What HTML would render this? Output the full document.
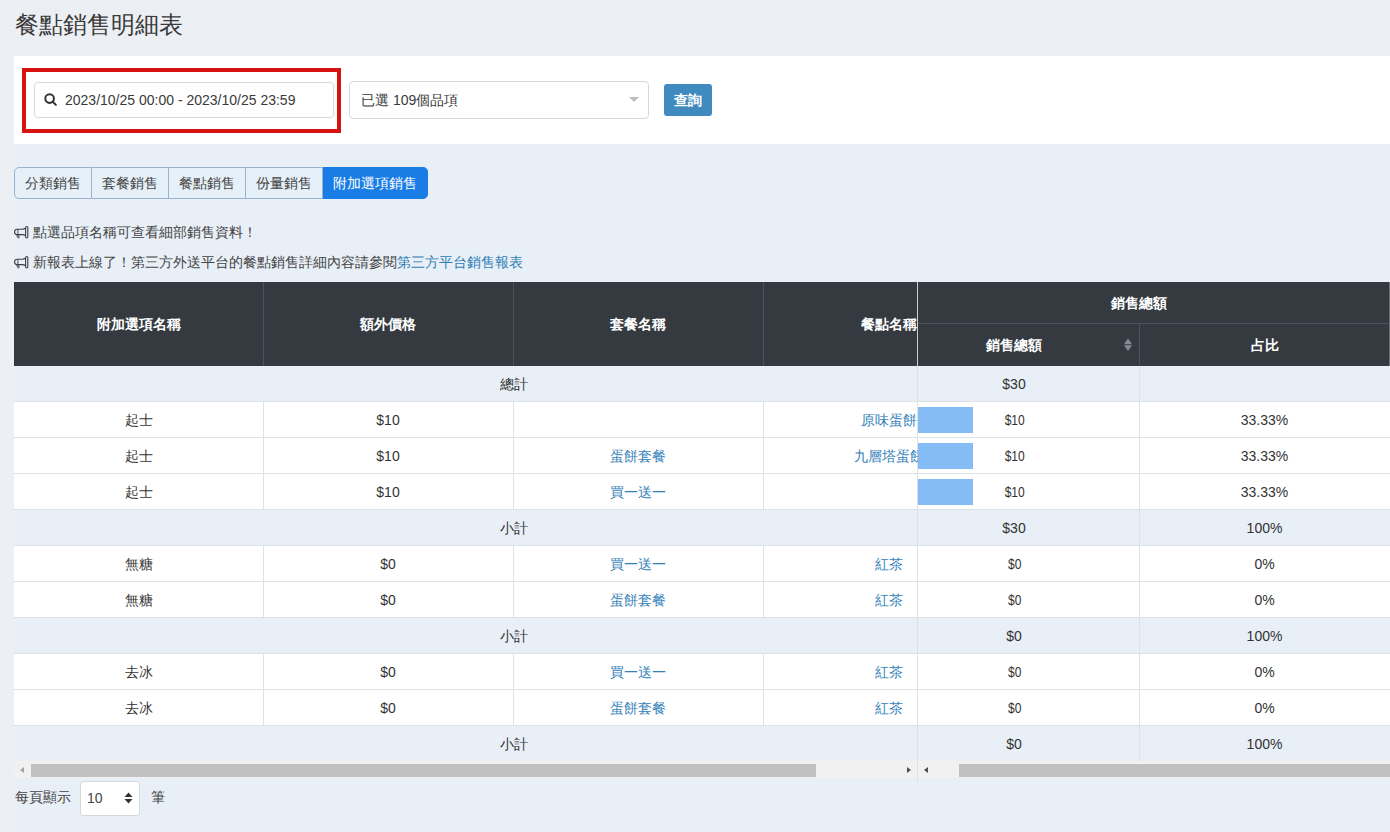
<!DOCTYPE html>
<html><head><meta charset="utf-8">
<style>
*{box-sizing:border-box;margin:0;padding:0}
html,body{width:1390px;height:832px;overflow:hidden}
body{background:#eceff3;font-family:"Liberation Sans",sans-serif;color:#333;font-size:14px;position:relative}
.abs{position:absolute}
#title{left:15px;top:9px;font-size:24px;line-height:32px;color:#3a3a3a;white-space:nowrap;font-weight:300}
#cont{left:14px;top:144px;width:1376px;height:688px;background:#e8eff6}
#panel{left:14px;top:56px;width:1376px;height:88px;background:#fff}
#redbox{left:22px;top:68px;width:319px;height:65px;border:4px solid #d81111}
#date{left:34px;top:82px;width:300px;height:36px;border:1px solid #d6d9dc;border-radius:4px;background:#fff}
#datetxt{left:65px;top:91px;line-height:18px;font-size:14px;color:#3a3a3a;white-space:nowrap}
#sel{left:349px;top:81px;width:300px;height:38px;border:1px solid #d6d9dc;border-radius:4px;background:#fff}
#seltxt{left:361px;top:91px;line-height:18px;color:#3a3a3a;white-space:nowrap}
#caret{left:629px;top:97px;width:0;height:0;border-left:5px solid transparent;border-right:5px solid transparent;border-top:5px solid #bdbdbd}
#btn{left:664px;top:84px;width:48px;height:32px;background:#3f8abf;border-radius:3px;color:#fff;text-align:center;line-height:32px;font-weight:bold}
#tabs{left:14px;top:167px;height:32px;display:flex}
.tab{height:32px;line-height:30px;border:1px solid #98b3cb;border-left:none;background:#e6f0f8;color:#444;text-align:center;white-space:nowrap}
.tab.first{border-left:1px solid #98b3cb;border-radius:5px 0 0 5px}
.tab.act{background:#1a7de6;border-color:#1a7de6;color:#fff;border-radius:0 5px 5px 0}
.notice{left:14px;line-height:18px;white-space:nowrap;color:#444}
.notice a{color:#2f7db5;text-decoration:none}
#thead{left:14px;top:282px;width:1376px;height:84px;background:#343a40}
.th{color:#fff;white-space:nowrap;line-height:18px;text-align:center;font-weight:bold}
.vl{width:1px;background:#4a5159}
.row{left:14px;width:1376px;height:36px;background:#fff;border-bottom:1px solid #dee2e6}
.row.tot{background:#e8eff6}
.cell{line-height:18px;white-space:nowrap;text-align:center;color:#333}
.sm span{display:inline-block;transform:scaleX(.86)}
.lk{color:#3481b9}
.bar{left:918px;width:55px;height:26px;background:#86bcf6}
.vb{width:1px;background:#dee2e6}
</style></head><body>
<div class="abs" id="title">餐點銷售明細表</div>
<div class="abs" id="cont"></div>
<div class="abs" id="panel"></div>
<div class="abs" id="redbox"></div>
<div class="abs" id="date"></div>
<svg class="abs" style="left:44px;top:93px" width="14" height="14" viewBox="0 0 14 14"><circle cx="5.6" cy="5.6" r="4.3" fill="none" stroke="#333" stroke-width="2"/><line x1="8.8" y1="8.8" x2="11.9" y2="11.9" stroke="#333" stroke-width="2" stroke-linecap="round"/></svg>
<div class="abs" id="datetxt">2023/10/25 00:00 - 2023/10/25 23:59</div>
<div class="abs" id="sel"></div>
<div class="abs" id="seltxt">已選 109個品項</div>
<div class="abs" id="caret"></div>
<div class="abs" id="btn">查詢</div>

<div class="abs" id="tabs">
<div class="tab first" style="width:78px">分類銷售</div>
<div class="tab" style="width:77px">套餐銷售</div>
<div class="tab" style="width:77px">餐點銷售</div>
<div class="tab" style="width:77px">份量銷售</div>
<div class="tab act" style="width:105px">附加選項銷售</div>
</div>

<svg class="abs" style="left:14px;top:226px" width="15" height="13" viewBox="0 0 15 13"><rect x="11.6" y="0.55" width="2.2" height="11.4" rx="1.1" fill="none" stroke="#3a3f44" stroke-width="1.1"/><path d="M11.5 2.3Q10 3.2 8.5 3.2H3Q0.6 3.2 0.6 6Q0.6 8.6 3 8.6H8.5Q10 8.6 11.5 9.4" fill="none" stroke="#3a3f44" stroke-width="1.1"/><path d="M3.9 3.4V8.4" stroke="#3a3f44" stroke-width="0.9"/><path d="M2.6 8.5L3.6 11.3Q3.9 11.9 4.5 11.9Q5.2 11.8 5.1 11L4.6 8.6" fill="none" stroke="#3a3f44" stroke-width="1"/></svg>
<div class="abs notice" style="top:223px;left:33px">點選品項名稱可查看細部銷售資料！</div>
<svg class="abs" style="left:14px;top:256px" width="15" height="13" viewBox="0 0 15 13"><rect x="11.6" y="0.55" width="2.2" height="11.4" rx="1.1" fill="none" stroke="#3a3f44" stroke-width="1.1"/><path d="M11.5 2.3Q10 3.2 8.5 3.2H3Q0.6 3.2 0.6 6Q0.6 8.6 3 8.6H8.5Q10 8.6 11.5 9.4" fill="none" stroke="#3a3f44" stroke-width="1.1"/><path d="M3.9 3.4V8.4" stroke="#3a3f44" stroke-width="0.9"/><path d="M2.6 8.5L3.6 11.3Q3.9 11.9 4.5 11.9Q5.2 11.8 5.1 11L4.6 8.6" fill="none" stroke="#3a3f44" stroke-width="1"/></svg>
<div class="abs notice" style="top:253px;left:33px">新報表上線了！第三方外送平台的餐點銷售詳細內容請參閱<a>第三方平台銷售報表</a></div>

<div class="abs" id="thead"></div>
<div class="abs vl" style="left:263px;top:282px;height:84px"></div>
<div class="abs vl" style="left:513px;top:282px;height:84px"></div>
<div class="abs vl" style="left:763px;top:282px;height:84px"></div>
<div class="abs vl" style="left:917px;top:282px;height:84px;background:#c8ccd0"></div>
<div class="abs vl" style="left:918px;top:323px;height:1px;width:472px"></div>
<div class="abs vl" style="left:1139px;top:324px;height:42px"></div>
<div class="abs th" style="left:14px;top:315px;width:249px">附加選項名稱</div>
<div class="abs th" style="left:263px;top:315px;width:250px">額外價格</div>
<div class="abs th" style="left:513px;top:315px;width:250px">套餐名稱</div>
<div class="abs th" style="left:861px;top:315px;width:57px;overflow:hidden;text-align:left">餐點名稱</div>
<div class="abs th" style="left:1039px;top:294px;width:200px">銷售總額</div>
<div class="abs th" style="left:918px;top:336px;width:191px">銷售總額</div>
<div class="abs th" style="left:1139px;top:336px;width:251px">占比</div>
<svg class="abs" style="left:1123px;top:338px" width="10" height="14" viewBox="0 0 10 14"><path d="M1 6.3L5 0.6L9 6.3Z M1 7.3L5 13L9 7.3Z" fill="#858b94"/></svg>
<div class="abs" style="left:1389px;top:282px;width:1px;height:84px;background:#6c7178"></div>
<div class="abs" style="left:1389px;top:366px;width:1px;height:395px;background:#dee2e6"></div>

<!--ROWS-->
<div class="abs row tot" style="top:366px"></div>
<div class="abs cell" style="left:414px;top:375px;width:200px">總計</div>
<div class="abs cell" style="left:918px;top:375px;width:192px">$30</div>
<div class="abs vb" style="left:917px;top:366px;height:36px"></div>
<div class="abs vb" style="left:1139px;top:366px;height:36px"></div>
<div class="abs row" style="top:402px"></div>
<div class="abs vb" style="left:263px;top:402px;height:36px"></div>
<div class="abs vb" style="left:513px;top:402px;height:36px"></div>
<div class="abs vb" style="left:763px;top:402px;height:36px"></div>
<div class="abs vb" style="left:917px;top:402px;height:36px"></div>
<div class="abs vb" style="left:1139px;top:402px;height:36px"></div>
<div class="abs cell" style="left:14px;top:411px;width:249px">起士</div>
<div class="abs cell" style="left:263px;top:411px;width:250px">$10</div>
<div class="abs cell lk" style="left:763px;top:411px;width:155px;height:18px;overflow:hidden"><span style="position:absolute;left:98px">原味蛋餅</span></div>
<div class="abs bar" style="top:407px"></div>
<div class="abs cell sm" style="left:919px;top:411px;width:192px"><span>$10</span></div>
<div class="abs cell" style="left:1139px;top:411px;width:251px">33.33%</div>
<div class="abs row" style="top:438px"></div>
<div class="abs vb" style="left:263px;top:438px;height:36px"></div>
<div class="abs vb" style="left:513px;top:438px;height:36px"></div>
<div class="abs vb" style="left:763px;top:438px;height:36px"></div>
<div class="abs vb" style="left:917px;top:438px;height:36px"></div>
<div class="abs vb" style="left:1139px;top:438px;height:36px"></div>
<div class="abs cell" style="left:14px;top:447px;width:249px">起士</div>
<div class="abs cell" style="left:263px;top:447px;width:250px">$10</div>
<div class="abs cell lk" style="left:513px;top:447px;width:250px">蛋餅套餐</div>
<div class="abs cell lk" style="left:763px;top:447px;width:155px;height:18px;overflow:hidden"><span style="position:absolute;left:91px">九層塔蛋餅</span></div>
<div class="abs bar" style="top:443px"></div>
<div class="abs cell sm" style="left:919px;top:447px;width:192px"><span>$10</span></div>
<div class="abs cell" style="left:1139px;top:447px;width:251px">33.33%</div>
<div class="abs row" style="top:474px"></div>
<div class="abs vb" style="left:263px;top:474px;height:36px"></div>
<div class="abs vb" style="left:513px;top:474px;height:36px"></div>
<div class="abs vb" style="left:763px;top:474px;height:36px"></div>
<div class="abs vb" style="left:917px;top:474px;height:36px"></div>
<div class="abs vb" style="left:1139px;top:474px;height:36px"></div>
<div class="abs cell" style="left:14px;top:483px;width:249px">起士</div>
<div class="abs cell" style="left:263px;top:483px;width:250px">$10</div>
<div class="abs cell lk" style="left:513px;top:483px;width:250px">買一送一</div>
<div class="abs bar" style="top:479px"></div>
<div class="abs cell sm" style="left:919px;top:483px;width:192px"><span>$10</span></div>
<div class="abs cell" style="left:1139px;top:483px;width:251px">33.33%</div>
<div class="abs row tot" style="top:510px"></div>
<div class="abs cell" style="left:414px;top:519px;width:200px">小計</div>
<div class="abs cell" style="left:918px;top:519px;width:192px">$30</div>
<div class="abs cell" style="left:1139px;top:519px;width:251px">100%</div>
<div class="abs vb" style="left:917px;top:510px;height:36px"></div>
<div class="abs vb" style="left:1139px;top:510px;height:36px"></div>
<div class="abs row" style="top:546px"></div>
<div class="abs vb" style="left:263px;top:546px;height:36px"></div>
<div class="abs vb" style="left:513px;top:546px;height:36px"></div>
<div class="abs vb" style="left:763px;top:546px;height:36px"></div>
<div class="abs vb" style="left:917px;top:546px;height:36px"></div>
<div class="abs vb" style="left:1139px;top:546px;height:36px"></div>
<div class="abs cell" style="left:14px;top:555px;width:249px">無糖</div>
<div class="abs cell" style="left:263px;top:555px;width:250px">$0</div>
<div class="abs cell lk" style="left:513px;top:555px;width:250px">買一送一</div>
<div class="abs cell lk" style="left:763px;top:555px;width:155px;height:18px;overflow:hidden"><span style="position:absolute;left:112px">紅茶</span></div>
<div class="abs cell sm" style="left:919px;top:555px;width:192px"><span>$0</span></div>
<div class="abs cell" style="left:1139px;top:555px;width:251px">0%</div>
<div class="abs row" style="top:582px"></div>
<div class="abs vb" style="left:263px;top:582px;height:36px"></div>
<div class="abs vb" style="left:513px;top:582px;height:36px"></div>
<div class="abs vb" style="left:763px;top:582px;height:36px"></div>
<div class="abs vb" style="left:917px;top:582px;height:36px"></div>
<div class="abs vb" style="left:1139px;top:582px;height:36px"></div>
<div class="abs cell" style="left:14px;top:591px;width:249px">無糖</div>
<div class="abs cell" style="left:263px;top:591px;width:250px">$0</div>
<div class="abs cell lk" style="left:513px;top:591px;width:250px">蛋餅套餐</div>
<div class="abs cell lk" style="left:763px;top:591px;width:155px;height:18px;overflow:hidden"><span style="position:absolute;left:112px">紅茶</span></div>
<div class="abs cell sm" style="left:919px;top:591px;width:192px"><span>$0</span></div>
<div class="abs cell" style="left:1139px;top:591px;width:251px">0%</div>
<div class="abs row tot" style="top:618px"></div>
<div class="abs cell" style="left:414px;top:627px;width:200px">小計</div>
<div class="abs cell" style="left:918px;top:627px;width:192px">$0</div>
<div class="abs cell" style="left:1139px;top:627px;width:251px">100%</div>
<div class="abs vb" style="left:917px;top:618px;height:36px"></div>
<div class="abs vb" style="left:1139px;top:618px;height:36px"></div>
<div class="abs row" style="top:654px"></div>
<div class="abs vb" style="left:263px;top:654px;height:36px"></div>
<div class="abs vb" style="left:513px;top:654px;height:36px"></div>
<div class="abs vb" style="left:763px;top:654px;height:36px"></div>
<div class="abs vb" style="left:917px;top:654px;height:36px"></div>
<div class="abs vb" style="left:1139px;top:654px;height:36px"></div>
<div class="abs cell" style="left:14px;top:663px;width:249px">去冰</div>
<div class="abs cell" style="left:263px;top:663px;width:250px">$0</div>
<div class="abs cell lk" style="left:513px;top:663px;width:250px">買一送一</div>
<div class="abs cell lk" style="left:763px;top:663px;width:155px;height:18px;overflow:hidden"><span style="position:absolute;left:112px">紅茶</span></div>
<div class="abs cell sm" style="left:919px;top:663px;width:192px"><span>$0</span></div>
<div class="abs cell" style="left:1139px;top:663px;width:251px">0%</div>
<div class="abs row" style="top:690px"></div>
<div class="abs vb" style="left:263px;top:690px;height:36px"></div>
<div class="abs vb" style="left:513px;top:690px;height:36px"></div>
<div class="abs vb" style="left:763px;top:690px;height:36px"></div>
<div class="abs vb" style="left:917px;top:690px;height:36px"></div>
<div class="abs vb" style="left:1139px;top:690px;height:36px"></div>
<div class="abs cell" style="left:14px;top:699px;width:249px">去冰</div>
<div class="abs cell" style="left:263px;top:699px;width:250px">$0</div>
<div class="abs cell lk" style="left:513px;top:699px;width:250px">蛋餅套餐</div>
<div class="abs cell lk" style="left:763px;top:699px;width:155px;height:18px;overflow:hidden"><span style="position:absolute;left:112px">紅茶</span></div>
<div class="abs cell sm" style="left:919px;top:699px;width:192px"><span>$0</span></div>
<div class="abs cell" style="left:1139px;top:699px;width:251px">0%</div>
<div class="abs row tot" style="top:726px"></div>
<div class="abs cell" style="left:414px;top:735px;width:200px">小計</div>
<div class="abs cell" style="left:918px;top:735px;width:192px">$0</div>
<div class="abs cell" style="left:1139px;top:735px;width:251px">100%</div>
<div class="abs vb" style="left:917px;top:726px;height:36px"></div>
<div class="abs vb" style="left:1139px;top:726px;height:36px"></div>
<div class="abs" style="left:14px;top:761px;width:1376px;height:1px;background:#e8eff6"></div>
<!--/ROWS-->

<!--SCROLL-->
<div class="abs" style="left:14px;top:761px;width:903px;height:17px;background:#f1f1f1"></div>
<div class="abs" style="left:31px;top:764px;width:785px;height:13px;background:#c1c1c1"></div>
<div class="abs" style="left:20px;top:767px;width:0;height:0;border-top:3.6px solid transparent;border-bottom:3.6px solid transparent;border-right:4.5px solid #a3a3a3"></div>
<div class="abs" style="left:907px;top:767px;width:0;height:0;border-top:3.6px solid transparent;border-bottom:3.6px solid transparent;border-left:4.5px solid #505050"></div>
<div class="abs vb" style="left:917px;top:761px;height:21px"></div>
<div class="abs" style="left:918px;top:761px;width:472px;height:17px;background:#f1f1f1"></div>
<div class="abs" style="left:959px;top:764px;width:431px;height:13px;background:#c1c1c1"></div>
<div class="abs" style="left:923.5px;top:767px;width:0;height:0;border-top:3.6px solid transparent;border-bottom:3.6px solid transparent;border-right:4.5px solid #505050"></div>
<div class="abs notice" style="left:15px;top:788px">每頁顯示</div>
<div class="abs" style="left:80px;top:781px;width:60px;height:35px;background:#fff;border:1px solid #d6d9dc;border-radius:3px"></div>
<div class="abs" style="left:87px;top:789px;line-height:18px;font-size:14px;color:#444">10</div>
<svg class="abs" style="left:124px;top:792px" width="9" height="12" viewBox="0 0 9 12"><path d="M0.5 5L4.5 0.5L8.5 5Z M0.5 7L4.5 11.5L8.5 7Z" fill="#333"/></svg>
<div class="abs notice" style="left:151px;top:788px">筆</div>
<!--/SCROLL-->
</body></html>
